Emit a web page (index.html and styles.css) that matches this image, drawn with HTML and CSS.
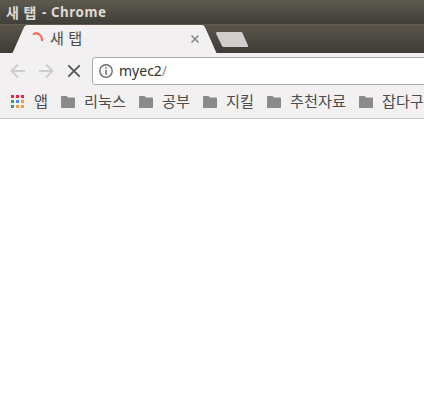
FILE: index.html
```html
<!DOCTYPE html>
<html lang="ko">
<head>
<meta charset="utf-8">
<title>새 탭 - Chrome</title>
<link rel="stylesheet" href="styles.css">
</head>
<body>
<header class="titlebar"><span class="title-ko">새 탭</span><span class="title-en">- Chrome</span></header>
<div class="tabstrip">
  <svg class="tab-shape" width="424" height="28" viewBox="0 0 424 28">
    <path d="M12.5 28L24 2.3Q25 0 27 0H202Q204 0 205 2.3L216.5 28Z" fill="#f2f0f1"/>
    <path d="M217.5 7H241Q242 7 242.5 8L248 20.5Q248.5 22 247 22H224Q222.500 22 222 21L216 8.500Q215.500 7 217.500 7Z" fill="#cfcecc"/>
  </svg>
  <div class="tab">
    <svg class="spinner" width="14" height="14" viewBox="0 0 14 14"><path d="M2 2.300C6.500-.2 11.500 3 11 9.200" fill="none" stroke="#ff6b4b" stroke-width="2"/></svg>
    <span class="tab-title">새 탭</span>
    <svg class="close" width="8" height="8" viewBox="0 0 8 8"><path d="M.6.6L7.400 7.400M7.400.6L.6 7.400" stroke="#8b8a8a" stroke-width="1.500"/></svg>
  </div>
</div>
<nav class="toolbar">
  <svg class="nav" width="16" height="16" viewBox="0 0 16 16"><path d="M15 8H2M8 1.500L1.500 8L8 14.500" fill="none" stroke="#cecccd" stroke-width="1.800"/></svg>
  <svg class="nav" width="16" height="16" viewBox="0 0 16 16"><path d="M1 8H14M8 1.500L14.500 8L8 14.500" fill="none" stroke="#cecccd" stroke-width="1.800"/></svg>
  <svg class="nav" width="16" height="16" viewBox="0 0 16 16"><path d="M2.300 2.300L13.700 13.700M13.700 2.300L2.300 13.700" stroke="#515051" stroke-width="1.700"/></svg>
  <div class="address">
    <svg width="14" height="14" viewBox="0 0 14 14"><circle cx="7" cy="7" r="6.200" fill="none" stroke="#6b6b6b" stroke-width="1.400"/><path d="M7 3.200V4.800M7 6V10.800" stroke="#6b6b6b" stroke-width="1.600"/></svg>
    <span class="url">myec2<span class="slash">/</span></span>
  </div>
</nav>
<div class="bookmarks">
  <svg class="apps" width="13" height="13" viewBox="0 0 13 13">
    <path d="M0 0H3V3H0ZM5 0H8V3H5ZM10 0H13V3H10Z" fill="#f52141"/>
    <path d="M0 5H3V8H0ZM0 10H3V13H0Z" fill="#3f9f5b"/>
    <path d="M5 5H8V8H5Z" fill="#4c8bf5"/>
    <path d="M10 5H13V8H10ZM5 10H8V13H5ZM10 10H13V13H10Z" fill="#fd9c30"/>
  </svg>
  <span class="label apps-label">앱</span>
  <svg class="folder" width="14" height="12" viewBox="0 0 14 12"><path d="M1 0H5.500L7 1.500H13Q14 1.500 14 2.500V11Q14 12 13 12H1Q0 12 0 11V1Q0 0 1 0Z"/></svg><span class="label">리눅스</span>
  <svg class="folder" width="14" height="12" viewBox="0 0 14 12"><path d="M1 0H5.500L7 1.500H13Q14 1.500 14 2.500V11Q14 12 13 12H1Q0 12 0 11V1Q0 0 1 0Z"/></svg><span class="label">공부</span>
  <svg class="folder" width="14" height="12" viewBox="0 0 14 12"><path d="M1 0H5.500L7 1.500H13Q14 1.500 14 2.500V11Q14 12 13 12H1Q0 12 0 11V1Q0 0 1 0Z"/></svg><span class="label">지킬</span>
  <svg class="folder" width="14" height="12" viewBox="0 0 14 12"><path d="M1 0H5.500L7 1.500H13Q14 1.500 14 2.500V11Q14 12 13 12H1Q0 12 0 11V1Q0 0 1 0Z"/></svg><span class="label">추천자료</span>
  <svg class="folder" width="14" height="12" viewBox="0 0 14 12"><path d="M1 0H5.500L7 1.500H13Q14 1.500 14 2.500V11Q14 12 13 12H1Q0 12 0 11V1Q0 0 1 0Z"/></svg><span class="label">잡다구</span>
</div>
<main class="page"></main>
</body>
</html>
```
FILE: styles.css
```css
* { box-sizing: border-box; }
body {
  margin: 0;
  height: 407px;
  overflow: hidden;
  background: #fff;
  font-family: "Noto Sans", "Noto Sans CJK KR", sans-serif;
  display: flex;
  flex-direction: column;
}
svg { display: block; flex: none; }
.titlebar {
  height: 25px;
  flex: none;
  display: flex;
  align-items: center;
  padding-left: 6px;
  background: linear-gradient(#5c594d, #59564c 15%, #403f3a 95%);
  border-bottom: 1px solid #625a4d;
  color: #dfdbd2;
  font-weight: 700;
  font-size: 14px;
  line-height: 24px;
  white-space: pre;
}
.title-ko { font-family: "Noto Sans CJK KR", sans-serif; width: 36px; font-size: 14px; letter-spacing: 0.4px; }
.title-en { font-size: 13.3px; letter-spacing: 0.6px; }
.tabstrip {
  position: relative;
  height: 28px;
  flex: none;
  background: linear-gradient(#59544b, #3e3c37);
}
.tab-shape { position: absolute; left: 0; top: 0; }
.tab {
  position: relative;
  height: 28px;
  width: 200px;
  display: flex;
  align-items: center;
  padding-left: 31px;
}
.tab-title {
  width: 141px;
  margin-left: 5px;
  padding-bottom: 4px;
  font-family: "Noto Sans CJK KR", sans-serif;
  font-size: 15.2px;
  line-height: 24px;
  color: #4c4c4c;
}
.toolbar {
  height: 36px;
  flex: none;
  display: flex;
  align-items: center;
  gap: 12px;
  padding-left: 10px;
  background: #f2f0f1;
}
.address {
  flex: none;
  width: 340px;
  height: 28px;
  margin-left: -2px;
  display: flex;
  align-items: center;
  padding-left: 6px;
  gap: 6px;
  background: #fff;
  border: 1px solid #aaa8a9;
  border-radius: 3px;
}
.url { font-size: 14px; line-height: 26px; color: #303030; }
.slash { color: #909090; }
.bookmarks {
  height: 30px;
  flex: none;
  display: flex;
  align-items: center;
  padding: 0 0 4px 11px;
  background: #f2f0f1;
  border-bottom: 1px solid #c8c6c7;
}
.label {
  flex: none;
  margin: 0 13px 0 9px;
  padding-bottom: 2px;
  font-family: "Noto Sans CJK KR", sans-serif;
  font-size: 15.217px;
  line-height: 23px;
  color: #4c4c4c;
}
.apps-label { margin-left: 10px; }
.folder { fill: #8b8a8b; }
.page { flex: 1; }
```
